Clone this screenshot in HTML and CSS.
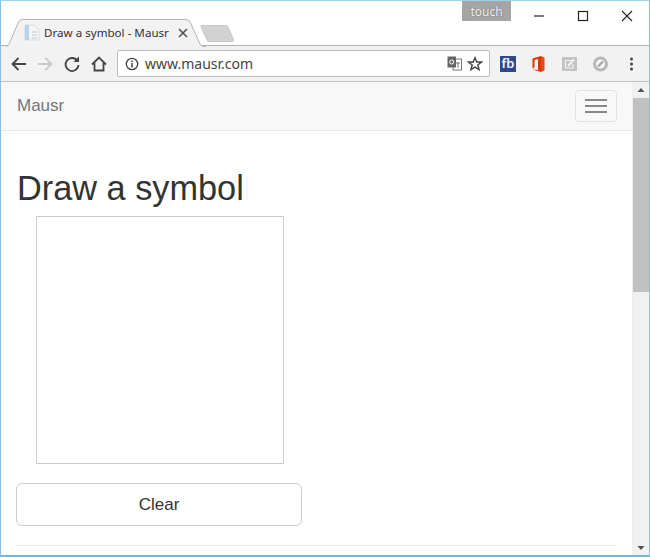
FILE: index.html
```html
<!DOCTYPE html>
<html lang="en">
<head>
<meta charset="utf-8">
<title>Draw a symbol - Mausr</title>
<link rel="stylesheet" href="styles.css">
</head>
<body>
<div class="window">
  <header class="titlebar">
    <div class="tab">
      <svg class="tab-shape" width="200" height="28" viewBox="0 0 200 28"><path d="M0 27.500H-1H0Q2 27.500 3 25L12 4Q13.500 .5 16 .5H180Q183 .5 184.500 4L194 25Q195 27.500 198 27.500H200" fill="#f2f2f2" stroke="#b4b4b4"/></svg>
      <svg class="favicon" width="16" height="17" viewBox="0 0 16 17"><path d="M1 1H10L15 6V16H1Z" fill="#f3f5f7" stroke="#d8dbde"/><path d="M1 1H5V16H1Z" fill="#b5d3ea"/><path d="M8 8H13M8 11H13M8 14H13" stroke="#c6ccd1"/></svg>
      <span class="tab-title">Draw a symbol - Mausr</span>
      <svg class="tab-close" width="10" height="10" viewBox="0 0 10 10"><path d="M1 1L9 9M9 1L1 9" stroke="#4a4a4a" stroke-width="1.500"/></svg>
    </div>
    <svg class="newtab" width="34" height="17" viewBox="0 0 34 17"><path d="M1.500 .5H26Q27.500 .5 28 2L33.500 14.500Q34 16.500 32 16.500H9Q7.500 16.500 7 15L1 2Q.5 .5 1.500 .5Z" fill="#d2d2d2" stroke="#c8c8c8"/></svg>
    <div class="touch">touch</div>
    <div class="winctl">
      <svg width="44" height="30" viewBox="0 0 44 30"><path d="M17 15H27" stroke="#222" stroke-width="1.200"/></svg>
      <svg width="44" height="30" viewBox="0 0 44 30"><rect x="17.500" y="10.500" width="9" height="9" fill="none" stroke="#222" stroke-width="1.200"/></svg>
      <svg width="44" height="30" viewBox="0 0 44 30"><path d="M17 10L27 20M27 10L17 20" stroke="#222" stroke-width="1.100"/></svg>
    </div>
  </header>

  <div class="toolbar">
    <svg class="tool" width="26" height="20" viewBox="0 0 26 20"><path d="M20 10H7M12.500 4L6.500 10L12.500 16" fill="none" stroke="#444" stroke-width="1.800"/></svg>
    <svg class="tool" width="26" height="20" viewBox="0 0 26 20"><path d="M6 10H19M13.500 4L19.500 10L13.500 16" fill="none" stroke="#c9c9c9" stroke-width="1.800"/></svg>
    <svg class="tool" width="28" height="20" viewBox="0 0 28 20"><path d="M19.500 7A6.500 6.500 0 1 0 20.500 11" fill="none" stroke="#444" stroke-width="1.800"/><path d="M15.500 8H21V2.500Z" fill="#444"/></svg>
    <svg class="tool" width="26" height="20" viewBox="0 0 26 20"><path d="M6 10.500L13 3.500L20 10.500M8.500 9V16.500H17.500V9" fill="none" stroke="#444" stroke-width="1.800"/></svg>
    <div class="omnibox">
      <svg width="14" height="14" viewBox="0 0 14 14"><circle cx="7" cy="7" r="5.700" fill="none" stroke="#444" stroke-width="1.300"/><path d="M7 6V10.500M7 3.500V5" stroke="#444" stroke-width="1.500"/></svg>
      <span class="url">www.mausr.com</span>
      <svg class="translate" width="15" height="15" viewBox="0 0 15 15"><rect x="6" y="3" width="8.500" height="11" fill="#fff" stroke="#777"/><rect x="0.500" y="0.500" width="8.500" height="11" fill="#666"/><circle cx="4.700" cy="6" r="2" fill="none" stroke="#fff"/><path d="M9 7H13M11 6V12" stroke="#777"/></svg>
      <svg class="star" width="16" height="16" viewBox="0 0 16 16"><path d="M8 1.700L9.800 6H14.500L10.800 9L12.100 13.800L8 11.200L3.900 13.800L5.200 9L1.500 6H6.200Z" fill="none" stroke="#444" stroke-width="1.400"/></svg>
    </div>
    <div class="exts">
      <span class="fb">fb</span>
      <svg width="31" height="18" viewBox="0 0 31 18"><path d="M9.500 3.500L18 1V17L9.500 14.500L15 15V4L11.500 5V12.500L9.500 13.500Z" fill="#d83b01"/><path d="M18 1L21.500 2.500V15.500L18 17Z" fill="#e8491d"/></svg>
      <svg width="31" height="16" viewBox="0 0 31 16"><rect x="8" y="1" width="15" height="14" fill="#c3c3c3"/><path d="M18 4.500H11.500V12H19V8" fill="none" stroke="#f0f0f0" stroke-width="1.200"/><path d="M14 10L20 3.500" stroke="#f4f4f4" stroke-width="2"/></svg>
      <svg width="31" height="18" viewBox="0 0 31 18"><circle cx="15.500" cy="9" r="6" fill="#f6f6f6" stroke="#b8b8b8" stroke-width="3"/><path d="M13 11.500L18 6.500" stroke="#a8a8a8" stroke-width="2.400"/></svg>
      <svg width="31" height="16" viewBox="0 0 31 16"><circle cx="15.500" cy="3" r="1.500" fill="#444"/><circle cx="15.500" cy="8" r="1.500" fill="#444"/><circle cx="15.500" cy="13" r="1.500" fill="#444"/></svg>
    </div>
  </div>

  <div class="viewport">
    <main class="page">
      <nav class="navbar">
        <span class="brand">Mausr</span>
        <span class="toggler"><i></i><i></i><i></i></span>
      </nav>
      <div class="content">
        <h1>Draw a symbol</h1>
        <div class="canvas"></div>
        <button class="clear" type="button">Clear</button>
        <hr>
      </div>
    </main>
    <aside class="scrollbar">
      <svg width="16" height="16" viewBox="0 0 16 16"><path d="M4.500 10L8 6L11.500 10Z" fill="#505050"/></svg>
      <div class="thumb"></div>
      <div class="track"></div>
      <svg width="16" height="14" viewBox="0 0 16 14"><path d="M4.500 5L8 9L11.500 5Z" fill="#505050"/></svg>
    </aside>
  </div>
</div>
</body>
</html>
```

FILE: styles.css
```css
* { box-sizing: border-box; }
html, body { margin: 0; height: 100%; overflow: hidden; }
body { font-family: "Liberation Sans", Arial, sans-serif; color: #333; background: #fff; }

.window {
  width: 650px;
  height: 557px;
  display: flex;
  flex-direction: column;
  border: 1px solid #7fc4e2;
  border-top-color: #9fd2ea;
  border-bottom: 2px solid #6cbbdc;
  overflow: hidden;
}

.titlebar {
  height: 45px;
  flex: none;
  display: flex;
  align-items: flex-end;
  background: #fff;
  border-bottom: 1px solid #b4b4b4;
  padding-left: 5px;
}

.tab {
  position: relative;
  width: 200px;
  height: 27px;
  margin-bottom: -1px;
  display: flex;
  align-items: center;
  padding: 0 0 0 18px;
  font-family: "Noto Sans", "Open Sans", sans-serif;
  font-size: 11.6px;
  color: #333;
}
.tab-shape { position: absolute; left: 0; top: 0; }
.favicon, .tab-title, .tab-close { position: relative; }
.favicon { flex: none; }
.tab-title { margin-left: 4px; white-space: nowrap; width: 126px; overflow: hidden; }
.tab-close { margin-left: 8px; flex: none; }

.newtab { flex: none; margin: 0 0 3px -5px; }

.touch {
  align-self: flex-start;
  margin-left: 228px;
  width: 49px;
  height: 20px;
  background: #a5a5a5;
  color: #f4f4f4;
  font-family: "Noto Sans", sans-serif;
  font-size: 12px;
  line-height: 22px;
  text-align: center;
  text-shadow: 0 0 1px #555;
  flex: none;
}

.winctl {
  align-self: flex-start;
  display: flex;
  flex: none;
  margin-left: 6px;
}

.toolbar {
  height: 36px;
  flex: none;
  display: flex;
  align-items: center;
  background: #f2f2f2;
  border-bottom: 1px solid #c0c0c0;
  padding-left: 5px;
}
.tool { flex: none; }

.omnibox {
  flex: none;
  width: 373px;
  height: 27px;
  margin-left: 5px;
  display: flex;
  align-items: center;
  padding: 0 6px 0 7px;
  background: #fff;
  border: 1px solid #bdbdbd;
  border-radius: 2px;
}
.url {
  margin-left: 6px;
  flex: 1;
  font-family: "Noto Sans", "Open Sans", sans-serif;
  font-size: 14px;
  color: #444;
}
.star { margin-left: 5px; }

.exts {
  display: flex;
  align-items: center;
  margin-left: 2px;
}
.fb {
  width: 16px;
  height: 16px;
  margin: 0 7px 0 8px;
  background: #2c4a8c;
  color: #f0f4fa;
  font-family: "Noto Sans", sans-serif;
  font-size: 13px;
  font-weight: 600;
  line-height: 15px;
  text-align: center;
}

.viewport { flex: 1; display: flex; min-height: 0; }
.page { flex: 1; min-width: 0; background: #fff; }

.navbar {
  height: 49px;
  display: flex;
  align-items: center;
  justify-content: space-between;
  padding: 0 15px 0 16px;
  background: #f8f8f8;
  border-bottom: 1px solid #e7e7e7;
}
.brand { font-size: 17px; color: #777; }
.toggler {
  width: 42px;
  height: 32px;
  display: flex;
  flex-direction: column;
  justify-content: center;
  align-items: center;
  gap: 4px;
  border: 1px solid #e2e2e2;
  border-radius: 4px;
}
.toggler i { display: block; width: 22px; height: 2px; background: #888; }

.content { padding: 0 15px; }
h1 {
  margin: 37px 0 0 1px;
  font-size: 34.300px;
  font-weight: 400;
  line-height: 40px;
  color: #333;
}
.canvas {
  width: 248px;
  height: 248px;
  margin: 8px 0 0 20px;
  background: #fff;
  border: 1px solid #ccc;
}
.clear {
  display: block;
  width: 286px;
  height: 43px;
  margin-top: 19px;
  padding: 0;
  font: 17px "Liberation Sans", Arial, sans-serif;
  color: #333;
  background: #fff;
  border: 1px solid #ccc;
  border-radius: 6px;
}
hr {
  margin: 19px 0 0;
  border: 0;
  border-top: 1px solid #eee;
}

.scrollbar {
  width: 17px;
  flex: none;
  display: flex;
  flex-direction: column;
  background: #f1f1f1;
  border-left: 1px solid #ededed;
}
.thumb { height: 194px; flex: none; background: #c1c1c1; }
.track { flex: 1; }
```
